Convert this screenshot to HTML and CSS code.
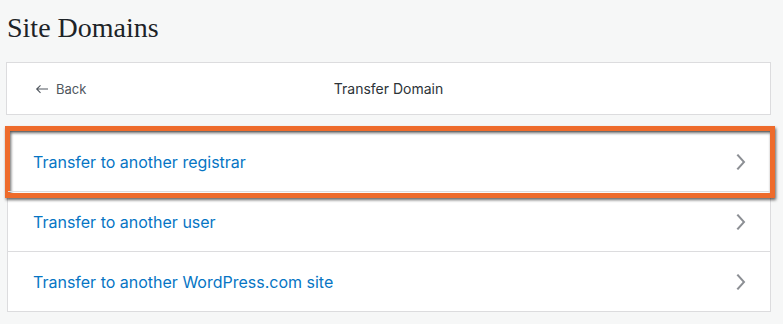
FILE: index.html
```html
<!DOCTYPE html>
<html>
<head>
<meta charset="utf-8">
<link rel="stylesheet" href="styles.css">
</head>
<body>
<div class="page">
  <h1 class="title">Site Domains</h1>
  <div class="header-card">
    <a class="back">
      <svg width="18" height="18" viewBox="0 0 24 24"><path d="M20 11.2H6.8l3.7-3.7-1-1L3.9 12l5.6 5.5 1-1-3.7-3.7H20z" fill="#50575e"/></svg>
      <span>Back</span>
    </a>
    <div class="header-title">Transfer Domain</div>
  </div>
  <div class="list">
    <a class="row highlighted"><span>Transfer to another registrar</span><svg class="chev" width="32" height="32" viewBox="0 0 24 24"><path d="M10.6 6L9.4 7l4.6 5-4.6 5 1.2 1 5.4-6z" fill="#8c8f94"/></svg></a>
    <a class="row"><span>Transfer to another user</span><svg class="chev" width="32" height="32" viewBox="0 0 24 24"><path d="M10.6 6L9.4 7l4.6 5-4.6 5 1.2 1 5.4-6z" fill="#8c8f94"/></svg></a>
    <a class="row"><span>Transfer to another WordPress.com site</span><svg class="chev" width="32" height="32" viewBox="0 0 24 24"><path d="M10.6 6L9.4 7l4.6 5-4.6 5 1.2 1 5.4-6z" fill="#8c8f94"/></svg></a>
  </div>
</div>
</body>
</html>
```

FILE: styles.css
```css
html, body {
  margin: 0;
  padding: 0;
  background: #f6f7f7;
}
.page {
  padding: 12px 12px 0 6px;
  font-family: Inter, "Noto Sans", sans-serif;
}
.title {
  margin: 0 0 18px 1px;
  font-family: "Liberation Serif", serif;
  font-weight: 400;
  font-size: 28px;
  line-height: 32px;
  color: #1d2327;
}
.header-card {
  position: relative;
  display: flex;
  align-items: center;
  height: 51px;
  background: #fff;
  border: 1px solid #dcdcde;
}
.back {
  display: flex;
  align-items: center;
  gap: 5px;
  padding-left: 26px;
  font-size: 13px;
  color: #50575e;
}
.back svg {
  display: block;
}
.header-title {
  position: absolute;
  left: 0;
  right: 0;
  text-align: center;
  font-size: 14px;
  color: #2c3338;
  pointer-events: none;
}
.list {
  margin-top: 16px;
  background: #fff;
  border: 1px solid #dcdcde;
  margin-left: 1px;
}
.row {
  position: relative;
  display: flex;
  align-items: center;
  justify-content: space-between;
  height: 59px;
  padding: 0 14px 0 25px;
  font-size: 16px;
  color: #0675c4;
}
.row + .row {
  border-top: 1px solid #dcdcde;
}
.chev {
  display: block;
}
.highlighted::after {
  content: "";
  position: absolute;
  left: -3px;
  right: -5px;
  top: -6px;
  bottom: -7px;
  border: 5px solid #ee6b2b;
  filter: drop-shadow(1px 2px 1.5px rgba(0,0,0,0.6));
}
```
